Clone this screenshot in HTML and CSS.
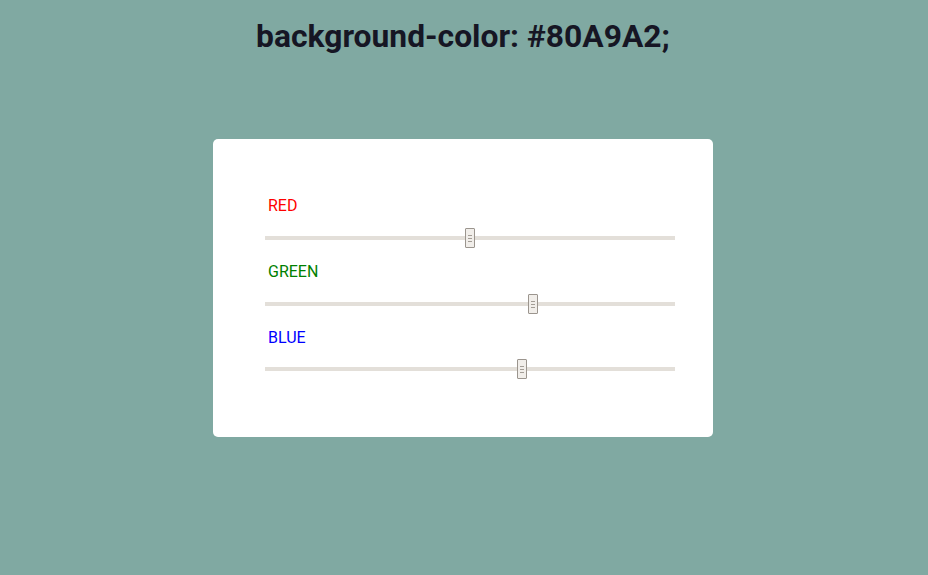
FILE: index.html
```html
<!DOCTYPE html>
<html>
<head>
<meta charset="utf-8">
<link rel="stylesheet" href="styles.css">
</head>
<body>
<div class="page">
  <h1 class="title">background-color: #80A9A2;</h1>
  <div class="card">
    <div class="row">
      <div class="label red">RED</div>
      <div class="slider"><div class="track"></div><div class="thumb" style="left: 200px"></div></div>
    </div>
    <div class="row">
      <div class="label green">GREEN</div>
      <div class="slider"><div class="track"></div><div class="thumb" style="left: 263px"></div></div>
    </div>
    <div class="row">
      <div class="label blue">BLUE</div>
      <div class="slider"><div class="track"></div><div class="thumb" style="left: 252px"></div></div>
    </div>
  </div>
</div>
</body>
</html>
```
FILE: styles.css
```css
html, body {
  margin: 0;
  padding: 0;
  background: #80A9A2;
  height: 100%;
}
.page {
  display: flex;
  flex-direction: column;
  align-items: center;
  padding-right: 2px;
  font-family: Roboto, "Liberation Sans", sans-serif;
}
.title {
  margin: 18px 0 0;
  font-size: 31.8px;
  font-weight: 700;
  line-height: 37px;
  color: #161624;
}
.card {
  margin-top: 84px;
  width: 500px;
  box-sizing: border-box;
  background: #fff;
  border-radius: 5px;
  padding: 58px 38px 58px 52px;
  display: flex;
  flex-direction: column;
  gap: 15px;
}
.row {
  display: flex;
  flex-direction: column;
  gap: 12px;
}
.label {
  font-size: 16px;
  line-height: 18.75px;
  padding-left: 3px;
}
.red { color: #ff0000; }
.green { color: #008000; }
.blue { color: #0000ff; }
.slider {
  position: relative;
  height: 20px;
  display: flex;
  align-items: center;
}
.track {
  width: 100%;
  height: 4px;
  background: #e3dfd9;
}
.thumb {
  position: absolute;
  top: 0;
  width: 10px;
  height: 20px;
  box-sizing: border-box;
  border: 1px solid #9b958e;
  background: #f1eeea;
  border-radius: 1px;
}
.thumb::after {
  content: "";
  position: absolute;
  left: 2px;
  right: 2px;
  top: 6px;
  height: 7px;
  background: repeating-linear-gradient(to bottom, #a39d96 0 1px, transparent 1px 3px);
}
```
